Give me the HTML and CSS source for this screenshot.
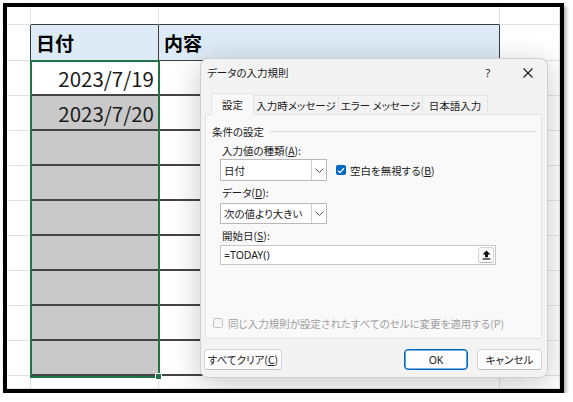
FILE: index.html
```html
<!DOCTYPE html>
<html lang="ja">
<head>
<meta charset="utf-8">
<title>データの入力規則</title>
<link rel="stylesheet" href="styles.css">
</head>
<body>
<div class="frame">
  <div class="sheet">
    <!-- row 1 -->
    <div class="cell"></div>
    <div class="cell cap"></div>
    <div class="cell cap"></div>
    <div class="cell"></div>
    <!-- header row -->
    <div class="cell lead"></div>
    <div class="cell head">日付</div>
    <div class="cell head">内容</div>
    <div class="cell"></div>
    <!-- data rows -->
    <div class="cell lead"></div><div class="cell date">2023/7/19</div><div class="cell note"></div><div class="cell"></div>
    <div class="cell lead"></div><div class="cell date shaded">2023/7/20</div><div class="cell note"></div><div class="cell"></div>
    <div class="cell lead"></div><div class="cell date shaded"></div><div class="cell note"></div><div class="cell"></div>
    <div class="cell lead"></div><div class="cell date shaded"></div><div class="cell note"></div><div class="cell"></div>
    <div class="cell lead"></div><div class="cell date shaded"></div><div class="cell note"></div><div class="cell"></div>
    <div class="cell lead"></div><div class="cell date shaded"></div><div class="cell note"></div><div class="cell"></div>
    <div class="cell lead"></div><div class="cell date shaded"></div><div class="cell note"></div><div class="cell"></div>
    <div class="cell lead"></div><div class="cell date shaded"></div><div class="cell note"></div><div class="cell"></div>
    <div class="cell lead"></div><div class="cell date shaded"></div><div class="cell note"></div><div class="cell"></div>
    <!-- trailing row -->
    <div class="cell"></div><div class="cell"></div><div class="cell"></div><div class="cell"></div>
  </div>

  <div class="selection"><span class="handle"></span></div>

  <div class="dialog">
    <div class="titlebar">
      <span class="title">データの入力規則</span>
      <span class="help">?</span>
      <span class="close">
        <svg width="10" height="10" viewBox="0 0 10 10"><path d="M0.5 0.5L9.5 9.5M9.5 0.5L0.5 9.5" stroke="#1b1b1b" stroke-width="1.1" fill="none"/></svg>
      </span>
    </div>

    <div class="tabs">
      <span class="tab active t1">設定</span>
      <span class="tab t2">入力時メッセージ</span>
      <span class="tab t3">エラー メッセージ</span>
      <span class="tab t4">日本語入力</span>
    </div>

    <div class="panel">
      <div class="legend"><span>条件の設定</span><span class="rule"></span></div>

      <div class="label">入力値の種類(<u>A</u>):</div>
      <div class="row">
        <div class="select"><span class="value">日付</span><span class="arrow"><svg width="9" height="5" viewBox="0 0 9 5"><path d="M0.5 0.5L4.5 4.5L8.5 0.5" stroke="#555" stroke-width="1" fill="none"/></svg></span></div>
        <span class="check on"><svg width="8" height="7" viewBox="0 0 8 7"><path d="M1 3.6L3 5.6L7 1.2" stroke="#fff" stroke-width="1.3" fill="none"/></svg></span>
        <span class="check-label">空白を無視する(<u>B</u>)</span>
      </div>

      <div class="label">データ(<u>D</u>):</div>
      <div class="row">
        <div class="select second"><span class="value">次の値より大きい</span><span class="arrow"><svg width="9" height="5" viewBox="0 0 9 5"><path d="M0.5 0.5L4.5 4.5L8.5 0.5" stroke="#555" stroke-width="1" fill="none"/></svg></span></div>
      </div>

      <div class="label">開始日(<u>S</u>):</div>
      <div class="field">
        <span class="value">=TODAY()</span>
        <span class="picker"><svg width="9" height="10" viewBox="0 0 9 10"><path d="M4.5 0.5L8.5 4.6H6V7.3H3V4.6H0.5Z" fill="#111"/><rect x="0.5" y="8.4" width="8" height="1.2" fill="#111"/></svg></span>
      </div>

      <div class="apply">
        <span class="check off"></span>
        <span>同じ入力規則が設定されたすべてのセルに変更を適用する(P)</span>
      </div>
    </div>

    <div class="footer">
      <span class="btn clear">すべてクリア(<u>C</u>)</span>
      <span class="btn ok">OK</span>
      <span class="btn cancel">キャンセル</span>
    </div>
  </div>
</div>
</body>
</html>
```

FILE: styles.css
```css
html, body {
  margin: 0;
  padding: 0;
  background: #ffffff;
}

.frame {
  position: relative;
  margin: 3px 0 0 3px;
  width: 561px;
  height: 390px;
  box-sizing: border-box;
  border: 4px solid #000;
  background: #fff;
  box-shadow: 2px 3px 4px rgba(0, 0, 0, 0.35);
  overflow: hidden;
}

/* worksheet grid */
.sheet {
  display: grid;
  grid-template-columns: 24px 128px 341px 1fr;
  grid-template-rows: 18px 36px repeat(9, 35px) 1fr;
  height: 100%;
  font-family: "Noto Sans CJK JP", "Noto Sans", sans-serif;
}

.cell {
  box-sizing: border-box;
  border-right: 1px solid #e1e1e1;
  border-bottom: 1px solid #e1e1e1;
}

.cap {
  border-bottom: 1px solid #3c3c3c;
}

.lead {
  border-right: 1px solid #3c3c3c;
}

.head {
  background: #ddebf7;
  border-right: 1px solid #3c3c3c;
  border-bottom: 1px solid #3c3c3c;
  font-size: 19px;
  font-weight: 700;
  color: #000;
  display: flex;
  align-items: center;
  padding-left: 5px;
}

.date {
  border-bottom: 2px solid #444;
  font-size: 20.5px;
  color: #1c1c1c;
  display: flex;
  align-items: center;
  justify-content: flex-end;
  padding-right: 4px;
}

.shaded {
  background: #c9c9c9;
}

.note {
  border-right: 1px solid #3c3c3c;
  border-bottom: 2px solid #444;
}

/* active range outline */
.selection {
  position: absolute;
  left: 23px;
  top: 53px;
  width: 130px;
  height: 318px;
  box-sizing: border-box;
  border: 2px solid #217346;
  pointer-events: none;
}

.handle {
  position: absolute;
  right: -4px;
  bottom: -4px;
  width: 5px;
  height: 5px;
  background: #217346;
  border: 1px solid #fff;
}

/* validation dialog */
.dialog {
  position: absolute;
  left: 193px;
  top: 51px;
  width: 348px;
  height: 320px;
  box-sizing: border-box;
  padding: 0 5px 0 4px;
  background: #f3f3f3;
  border: 1px solid #cfcfcf;
  border-radius: 8px;
  box-shadow: 0 6px 30px rgba(0, 0, 0, 0.22);
  display: flex;
  flex-direction: column;
  font-family: "Noto Sans CJK JP", "Noto Sans", sans-serif;
  font-size: 10.5px;
  font-feature-settings: "palt";
  color: #1b1b1b;
}

.dialog u {
  text-decoration-thickness: 1px;
  text-underline-offset: 1px;
}

.titlebar {
  height: 34px;
  display: flex;
  align-items: flex-start;
  padding-top: 6px;
  box-sizing: border-box;
}

.title {
  flex: 1;
  line-height: 16px;
  padding-left: 2px;
  font-size: 10.5px;
}

.help {
  width: 24px;
  text-align: center;
  line-height: 16px;
  font-family: "Noto Sans", sans-serif;
  font-size: 11px;
  margin-right: 14px;
}

.close {
  width: 28px;
  height: 16px;
  display: flex;
  align-items: center;
  justify-content: center;
}

.tabs {
  display: flex;
  align-items: flex-end;
  height: 21px;
  padding-left: 6px;
}

.tab {
  box-sizing: border-box;
  height: 19px;
  display: flex;
  align-items: center;
  justify-content: center;
  background: #f3f3f3;
  border: 1px solid #e3e3e3;
  border-bottom: none;
  margin-right: -1px;
}

.tab.active {
  height: 21px;
  background: #f9f9f9;
  position: relative;
  z-index: 1;
  margin-bottom: -1px;
  height: 22px;
}

.t1 { width: 43px; }
.t2 { width: 86px; }
.t3 { width: 85px; }
.t4 { width: 66px; }

.panel {
  height: 225px;
  box-sizing: border-box;
  background: #f9f9f9;
  border: 1px solid #e3e3e3;
  display: flex;
  flex-direction: column;
}

.legend {
  display: flex;
  align-items: center;
  height: 16px;
  margin-top: 8px;
  padding-left: 6px;
  padding-right: 4px;
}

.rule {
  flex: 1;
  height: 1px;
  background: #dcdcdc;
  margin-left: 6px;
}

.label {
  height: 16px;
  line-height: 16px;
  margin-top: 4px;
  padding-left: 16px;
}

.row {
  display: flex;
  align-items: center;
  padding-left: 14px;
}

.select {
  width: 107px;
  height: 22px;
  box-sizing: border-box;
  background: #fff;
  border: 1px solid #b9b9b9;
  display: flex;
  align-items: stretch;
}

.select.second {
  height: 21px;
  margin-top: 2px;
}

.value {
  flex: 1;
  display: flex;
  align-items: center;
  padding-left: 3px;
}

.arrow {
  width: 14px;
  border-left: 1px solid #cfcfcf;
  display: flex;
  align-items: center;
  justify-content: center;
}

.check {
  box-sizing: border-box;
  width: 10px;
  height: 10px;
  border-radius: 2px;
  display: flex;
  align-items: center;
  justify-content: center;
}

.check.on {
  background: #0067c0;
  margin-left: 9px;
  margin-right: 4px;
}

.check.off {
  border: 1px solid #c6c6c6;
  background: #f6f6f6;
  margin-right: 5px;
}

.field {
  margin: 1px 0 0 14px;
  width: 276px;
  height: 20px;
  box-sizing: border-box;
  background: #fff;
  border: 1px solid #c6c6c6;
  display: flex;
  align-items: center;
  font-family: "Noto Sans", sans-serif;
  font-size: 10.5px;
}

.picker {
  width: 16px;
  height: 16px;
  box-sizing: border-box;
  margin-right: 1px;
  border: 1px solid #d6d6d6;
  border-bottom-color: #b0b0b0;
  border-radius: 3px;
  background: #fdfdfd;
  display: flex;
  align-items: center;
  justify-content: center;
}

.apply {
  display: flex;
  align-items: center;
  height: 16px;
  margin-top: 50px;
  padding-left: 7px;
  color: #a0a0a0;
}

.footer {
  display: flex;
  margin-top: 10px;
}

.btn {
  box-sizing: border-box;
  height: 21px;
  display: flex;
  align-items: center;
  justify-content: center;
  background: #fdfdfd;
  border: 1px solid #d3d3d3;
  border-bottom-color: #bdbdbd;
  border-radius: 4px;
}

.clear {
  width: 78px;
  margin-left: -1px;
}

.ok {
  width: 64px;
  margin-left: auto;
  border: 1px solid #0067c0;
  box-shadow: inset 0 0 0 0.6px #0067c0;
  font-family: "Noto Sans", sans-serif;
  font-size: 10.5px;
}

.cancel {
  width: 65px;
  margin-left: 9px;
}
```
